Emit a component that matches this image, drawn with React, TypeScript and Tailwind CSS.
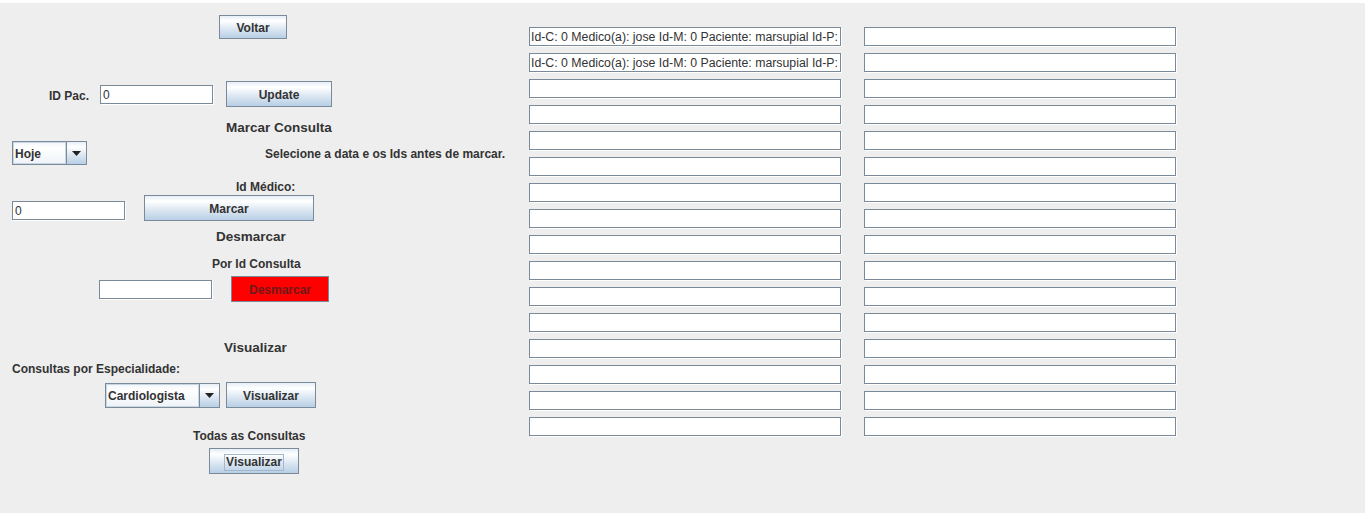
import React from "react";

const btn =
  "flex items-center justify-center pt-[2px] border border-[#7a8a99] bg-[linear-gradient(180deg,#e6eef6_0%,#ffffff_22%,#dfe9f3_55%,#b8cfe5_100%)] text-[12px] font-bold text-[#333333] shrink-0";

const field =
  "h-[19px] bg-white border border-[#7a8a99] shadow-[1px_1px_0_#ffffff] text-[12px] text-[#333333] leading-[19px] pl-[2px] overflow-hidden whitespace-nowrap shrink-0";

function Arrow() {
  return (
    <svg width="9" height="5" viewBox="0 0 9 5">
      <path d="M0 0H9L4.5 5Z" fill="#222" />
    </svg>
  );
}

function Combo({ label, w }: { label: string; w: string }) {
  return (
    <div className={`flex h-full border border-[#7a8a99] shrink-0 ${w}`}>
      <div className="flex-1 flex items-center pl-[2px] pt-[2px] text-[12px] font-bold text-[#333333] bg-[linear-gradient(180deg,#f2f6fa_0%,#ffffff_30%,#eef3f8_100%)] border-r border-[#7a8a99] shadow-[inset_1px_1px_0_#c9d6e3,inset_-1px_-1px_0_#c9d6e3]">
        {label}
      </div>
      <div className="w-[19px] flex items-center justify-center bg-[linear-gradient(180deg,#e6eef6_0%,#ffffff_22%,#dfe9f3_55%,#b8cfe5_100%)]">
        <Arrow />
      </div>
    </div>
  );
}

const rows = Array.from({ length: 16 });
const filled =
  "Id-C: 0 Medico(a): jose Id-M: 0 Paciente: marsupial Id-P: 0 Especialidade: Cardiologista";

function Field({ w, value, extra = "" }: { w: string; value?: string; extra?: string }) {
  return (
    <input
      readOnly
      value={value ?? ""}
      className={`h-[19px] bg-white border border-[#7a8a99] shadow-[1px_1px_0_#ffffff] text-[12.3px] text-[#333333] pl-[1px] pt-[1px] outline-none shrink-0 font-['Liberation_Sans',Arial,sans-serif] ${w} ${extra}`}
    />
  );
}

export default function App() {
  return (
    <div className="w-[1365px] h-[513px] bg-[#eeeeee] border-t-[3px] border-white flex overflow-hidden font-['Liberation_Sans',Arial,sans-serif] text-[#333333]">
      <div className="w-[529px] shrink-0 flex flex-col">
        {/* Voltar */}
        <div className="flex h-[24px] mt-[12px]">
          <div className={`${btn} ml-[219px] w-[68px] h-[24px]`}>Voltar</div>
        </div>
        {/* ID Pac */}
        <div className="flex items-center h-[26px] mt-[42px]">
          <div className="ml-[49px] w-[51px] pt-[3px] text-[12px] font-bold">ID Pac.</div>
          <div className={`${field} w-[113px]`}>0</div>
          <div className={`${btn} ml-[13px] w-[106px] h-[26px]`}>Update</div>
        </div>
        <div className="h-[16px] leading-[18px] mt-[12px] ml-[226px] text-[13.5px] font-bold whitespace-nowrap">
          Marcar Consulta
        </div>
        <div className="flex items-center h-[24px] mt-[6px]">
          <div className="ml-[12px] h-[24px] flex">
            <Combo label="Hoje" w="w-[75px]" />
          </div>
          <div className="ml-[178px] pt-[2px] text-[12px] font-bold whitespace-nowrap">
            Selecione a data e os Ids antes de marcar.
          </div>
        </div>
        <div className="h-[16px] leading-[18px] mt-[13px] ml-[236px] text-[12px] font-bold">
          Id Médico:
        </div>
        <div className="flex items-center h-[26px] mt-[1px]">
          <div className={`${field} ml-[12px] w-[113px] mt-[6px] self-start`}>0</div>
          <div className={`${btn} ml-[19px] w-[170px] h-[26px]`}>Marcar</div>
        </div>
        <div className="h-[16px] leading-[18px] mt-[7px] ml-[216px] text-[13.5px] font-bold">
          Desmarcar
        </div>
        <div className="h-[16px] leading-[18px] mt-[11px] ml-[212px] text-[12px] font-bold">
          Por Id Consulta
        </div>
        <div className="flex items-center h-[26px] mt-[5px]">
          <div className={`${field} ml-[99px] w-[113px]`}></div>
          <div className="ml-[19px] w-[98px] h-[26px] pt-[2px] flex items-center justify-center border border-[#7a8a99] bg-[#ff0000] text-[12px] font-bold text-[#6e1a1a] shrink-0">
            Desmarcar
          </div>
        </div>
        <div className="h-[16px] leading-[18px] mt-[37px] ml-[224px] text-[13.5px] font-bold">
          Visualizar
        </div>
        <div className="h-[16px] leading-[18px] mt-[5px] ml-[12px] text-[12px] font-bold whitespace-nowrap">
          Consultas por Especialidade:
        </div>
        <div className="flex items-center h-[26px] mt-[6px]">
          <div className="ml-[105px] h-[25px] flex">
            <Combo label="Cardiologista" w="w-[115px]" />
          </div>
          <div className={`${btn} ml-[6px] w-[90px] h-[26px]`}>Visualizar</div>
        </div>
        <div className="h-[16px] leading-[18px] mt-[19px] ml-[193px] text-[12px] font-bold whitespace-nowrap">
          Todas as Consultas
        </div>
        <div className="flex h-[26px] mt-[5px]">
          <div className={`${btn} ml-[209px] w-[90px] h-[26px]`}>
            <span className="border border-[#a3b8cc] px-[1px] leading-[15px]">Visualizar</span>
          </div>
        </div>
      </div>
      <div className="pt-[24px]">
        <div className="grid grid-cols-[312px_312px] gap-x-[23px] gap-y-[7px]">
          {rows.map((_, i) => (
            <React.Fragment key={i}>
              <Field w="w-[312px]" value={i < 2 ? filled : ""} />
              <Field w="w-[312px]" />
            </React.Fragment>
          ))}
        </div>
      </div>
    </div>
  );
}
